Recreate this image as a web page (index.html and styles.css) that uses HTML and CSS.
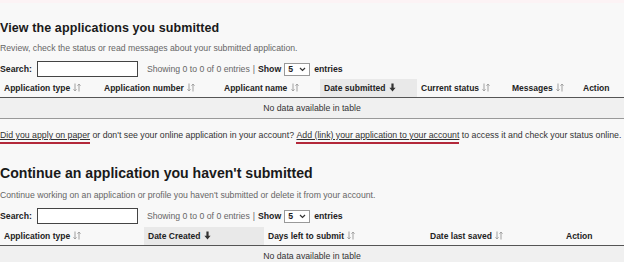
FILE: index.html
```html
<!DOCTYPE html>
<html>
<head>
<meta charset="utf-8">
<link rel="stylesheet" href="styles.css">
</head>
<body>
<div class="topstrip"></div>
<section class="block first">
  <h2 class="title t1">View the applications you submitted</h2>
  <p class="sub">Review, check the status or read messages about your submitted application.</p>
  <div class="controls">
    <label class="search-label">Search:</label>
    <input class="search" type="text">
    <span class="info">Showing 0 to 0 of 0 entries</span>
    <span class="sep">|</span>
    <span class="show">Show</span>
    <span class="select"><span>5</span><svg width="7" height="5" viewBox="0 0 7 5"><path d="M1 1 L3.5 3.5 L6 1" fill="none" stroke="#333" stroke-width="1.2"/></svg></span>
    <span class="show">entries</span>
  </div>
  <table class="dt">
    <colgroup>
      <col style="width:100px"><col style="width:120px"><col style="width:100px"><col style="width:97px"><col style="width:91px"><col style="width:71px"><col>
    </colgroup>
    <thead>
      <tr>
        <th>Application type <svg class="srt" width="8" height="9" viewBox="0 0 8 9"><path d="M2 0.5 V8 M0.5 6.3 L2 8 L3.5 6.3 M6 8.5 V1 M4.5 2.7 L6 1 L7.5 2.7" fill="none" stroke="#a0a0a0" stroke-width="1"/></svg></th>
        <th>Application number <svg class="srt" width="8" height="9" viewBox="0 0 8 9"><path d="M2 0.5 V8 M0.5 6.3 L2 8 L3.5 6.3 M6 8.5 V1 M4.5 2.7 L6 1 L7.5 2.7" fill="none" stroke="#a0a0a0" stroke-width="1"/></svg></th>
        <th>Applicant name <svg class="srt" width="8" height="9" viewBox="0 0 8 9"><path d="M2 0.5 V8 M0.5 6.3 L2 8 L3.5 6.3 M6 8.5 V1 M4.5 2.7 L6 1 L7.5 2.7" fill="none" stroke="#a0a0a0" stroke-width="1"/></svg></th>
        <th class="sorted">Date submitted <svg class="srt" width="7" height="9" viewBox="0 0 7 9"><path d="M2.4 0.5 H4.6 V4.8 H6.6 L3.5 8.6 L0.4 4.8 H2.4 Z" fill="#333"/></svg></th>
        <th>Current status <svg class="srt" width="8" height="9" viewBox="0 0 8 9"><path d="M2 0.5 V8 M0.5 6.3 L2 8 L3.5 6.3 M6 8.5 V1 M4.5 2.7 L6 1 L7.5 2.7" fill="none" stroke="#a0a0a0" stroke-width="1"/></svg></th>
        <th>Messages <svg class="srt" width="8" height="9" viewBox="0 0 8 9"><path d="M2 0.5 V8 M0.5 6.3 L2 8 L3.5 6.3 M6 8.5 V1 M4.5 2.7 L6 1 L7.5 2.7" fill="none" stroke="#a0a0a0" stroke-width="1"/></svg></th>
        <th>Action</th>
      </tr>
    </thead>
    <tbody>
      <tr><td colspan="7" class="empty">No data available in table</td></tr>
    </tbody>
  </table>
  <p class="note"><a class="lnk mark">Did you apply on paper</a> or don't see your online application in your account? <a class="lnk mark">Add (link) your application to your account</a> to access it and check your status online.</p>
</section>
<section class="block second">
  <h2 class="title t2">Continue an application you haven't submitted</h2>
  <p class="sub">Continue working on an application or profile you haven't submitted or delete it from your account.</p>
  <div class="controls">
    <label class="search-label">Search:</label>
    <input class="search" type="text">
    <span class="info">Showing 0 to 0 of 0 entries</span>
    <span class="sep">|</span>
    <span class="show">Show</span>
    <span class="select"><span>5</span><svg width="7" height="5" viewBox="0 0 7 5"><path d="M1 1 L3.5 3.5 L6 1" fill="none" stroke="#333" stroke-width="1.2"/></svg></span>
    <span class="show">entries</span>
  </div>
  <table class="dt">
    <colgroup>
      <col style="width:144px"><col style="width:120px"><col style="width:162px"><col style="width:136px"><col>
    </colgroup>
    <thead>
      <tr>
        <th>Application type <svg class="srt" width="8" height="9" viewBox="0 0 8 9"><path d="M2 0.5 V8 M0.5 6.3 L2 8 L3.5 6.3 M6 8.5 V1 M4.5 2.7 L6 1 L7.5 2.7" fill="none" stroke="#a0a0a0" stroke-width="1"/></svg></th>
        <th class="sorted">Date Created <svg class="srt" width="7" height="9" viewBox="0 0 7 9"><path d="M2.4 0.5 H4.6 V4.8 H6.6 L3.5 8.6 L0.4 4.8 H2.4 Z" fill="#333"/></svg></th>
        <th>Days left to submit <svg class="srt" width="8" height="9" viewBox="0 0 8 9"><path d="M2 0.5 V8 M0.5 6.3 L2 8 L3.5 6.3 M6 8.5 V1 M4.5 2.7 L6 1 L7.5 2.7" fill="none" stroke="#a0a0a0" stroke-width="1"/></svg></th>
        <th>Date last saved <svg class="srt" width="8" height="9" viewBox="0 0 8 9"><path d="M2 0.5 V8 M0.5 6.3 L2 8 L3.5 6.3 M6 8.5 V1 M4.5 2.7 L6 1 L7.5 2.7" fill="none" stroke="#a0a0a0" stroke-width="1"/></svg></th>
        <th>Action</th>
      </tr>
    </thead>
    <tbody>
      <tr><td colspan="5" class="empty">No data available in table</td></tr>
    </tbody>
  </table>
</section>
</body>
</html>
```
FILE: styles.css
```css
html, body {
  margin: 0;
  padding: 0;
  background: #f8f8f8;
  font-family: "Liberation Sans", Arial, sans-serif;
  color: #222;
  font-size: 8.7px;
  overflow: hidden;
}
.topstrip {
  height: 3px;
  background: #fcf3f5;
}
.block.first { padding-top: 16px; }
.block.second { padding-top: 20px; }
.title {
  margin: 0;
  font-weight: bold;
  line-height: 18px;
  color: #1a1a1a;
}
.t1 { font-size: 12.5px; letter-spacing: 0.1px; }
.t2 { font-size: 14.1px; }
.sub {
  margin: 5px 0 0 0;
  color: #666;
  line-height: 12px;
}
.second .sub { margin-top: 7px; }
.controls {
  display: flex;
  align-items: center;
  margin-top: 7px;
  height: 16px;
}
.search-label { font-weight: bold; color: #222; }
.search {
  margin: 0 0 0 5px;
  width: 101px;
  height: 16px;
  box-sizing: border-box;
  border: 1px solid #444;
  background: #fff;
  padding: 0;
}
.info { color: #666; margin-left: 9px; }
.sep { color: #666; margin: 0 3px; }
.show { font-weight: bold; color: #222; }
.select {
  display: inline-flex;
  align-items: center;
  justify-content: space-between;
  box-sizing: border-box;
  width: 26px;
  height: 13px;
  border: 1px solid #999;
  background: #fff;
  margin: 0 4px 0 3px;
  padding: 0 3px 0 3px;
  font-weight: bold;
}
.dt {
  width: 100%;
  border-collapse: collapse;
  table-layout: fixed;
  margin-top: 2px;
}
.second .dt { margin-top: 3px; }
.dt th {
  text-align: left;
  font-weight: bold;
  font-size: 8.5px;
  height: 18px;
  padding: 0 4px;
  border-bottom: 1.5px solid #555;
  white-space: nowrap;
  color: #222;
}
.dt th.sorted { background: #e9e9e9; }
.srt { vertical-align: -1px; margin-left: 1px; }
.empty {
  text-align: center;
  background: #f0f0f0;
  height: 20px;
  padding: 0;
  color: #333;
  border-bottom: 1.5px solid #999;
}
.note {
  margin: 10px 0 0 0;
  color: #333;
  line-height: 12px;
  font-size: 8.75px;
  white-space: nowrap;
}
.lnk {
  color: #333;
  text-decoration: underline;
}
.mark {
  display: inline-block;
  border-bottom: 2px solid #b3283a;
  padding-bottom: 2px;
  line-height: 10px;
}
```
